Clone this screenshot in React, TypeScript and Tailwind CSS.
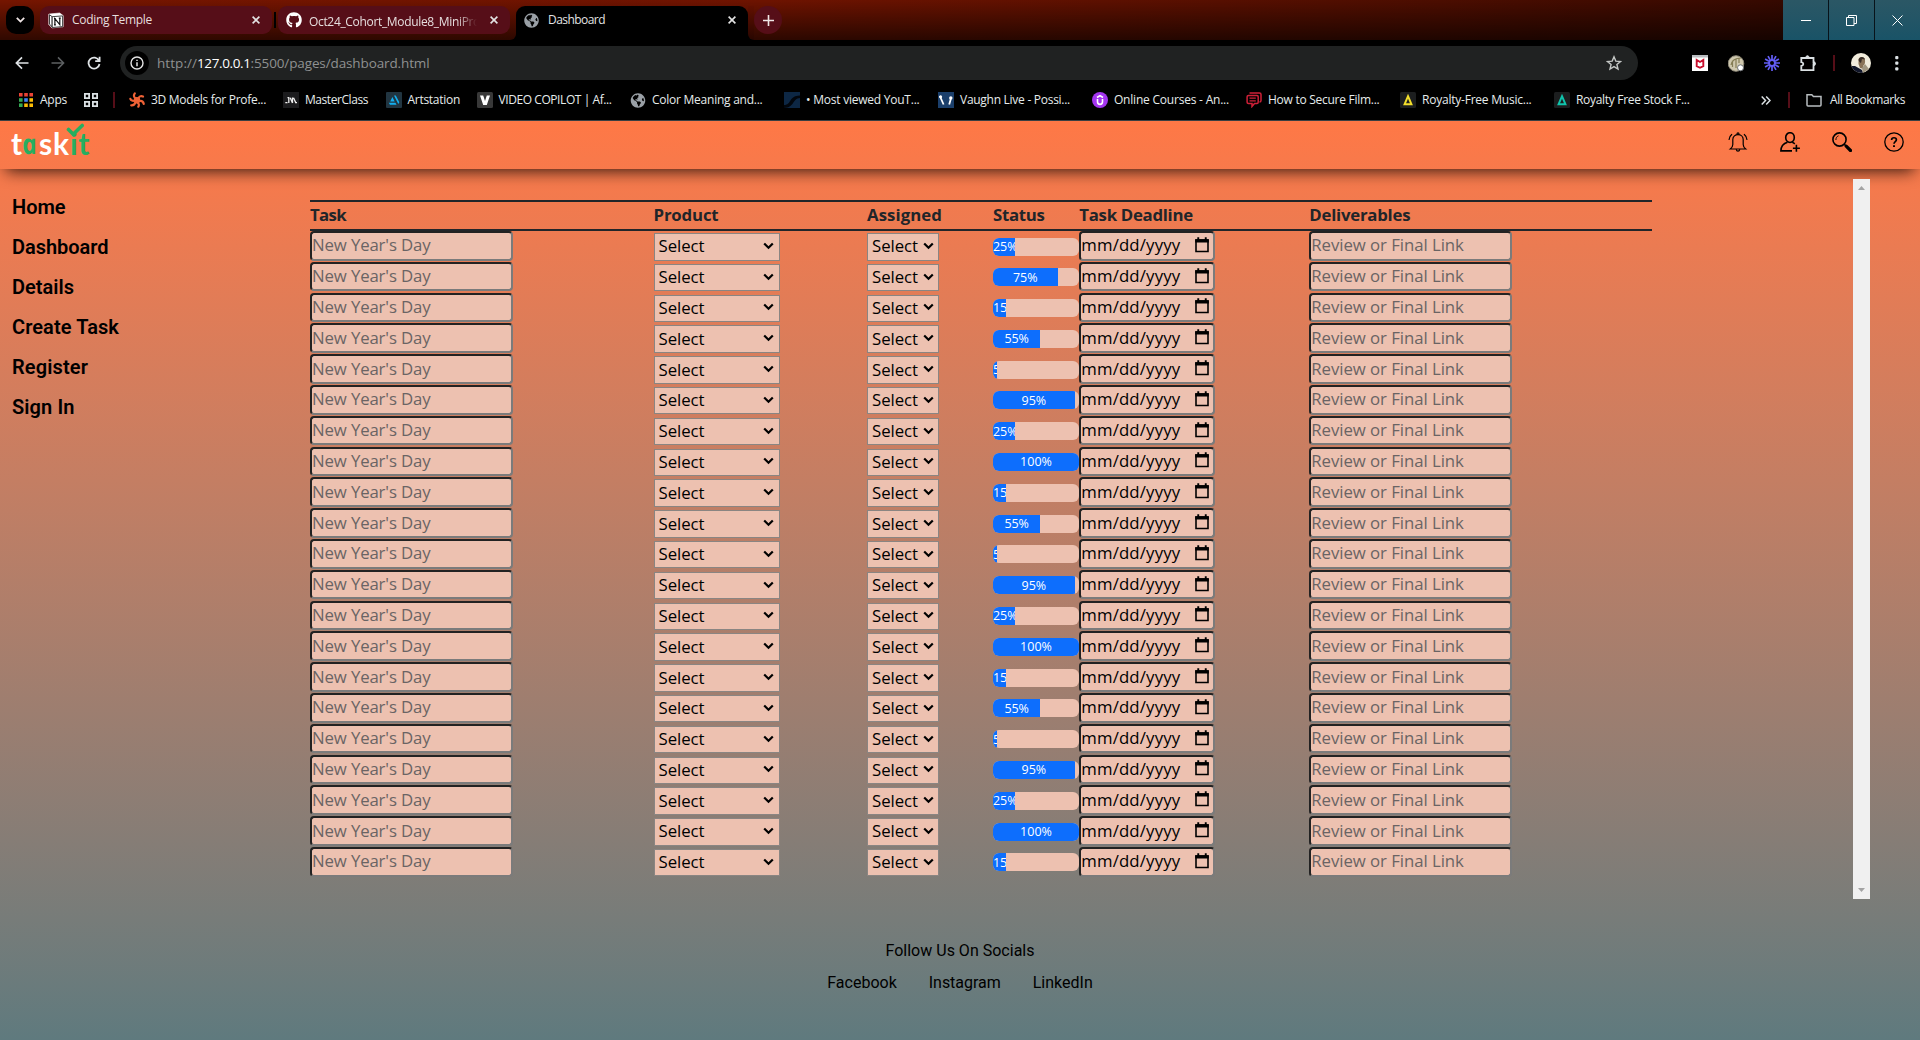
import React, { useLayoutEffect, useRef, useState } from "react";
import { FaGithub, FaGlobeAmericas } from "react-icons/fa";

/* Single-line label whose tracking is adjusted so that it takes up `w` pixels. */
function Fit({ w, children, className = "" }: { w: number; children: string; className?: string }) {
  const ref = useRef<HTMLSpanElement>(null);
  const [spacing, setSpacing] = useState(0);
  useLayoutEffect(() => {
    if (ref.current) {
      const natural = ref.current.getBoundingClientRect().width;
      setSpacing((w - natural) / children.length);
    }
  }, []);
  return (
    <span ref={ref} className={`inline-block justify-self-start whitespace-pre ${className}`} style={{ letterSpacing: `${spacing}px` }}>
      {children}
    </span>
  );
}

const Close = () => (
  <svg className="h-[8px] w-[8px] shrink-0" viewBox="0 0 8 8" stroke="#e3e3e3" strokeWidth="1.6">
    <path d="M.6.6l6.8 6.8M7.4.6L.6 7.4" />
  </svg>
);

const Notion = () => (
  <svg className="h-[17px] w-4 shrink-0" viewBox="0 0 16 16">
    <path d="M.8 1.6L11.6.5l3.600 2.600v11.200L4 15.400.8 12z" fill="#fff" stroke="#fff" strokeWidth=".6" />
    <path d="M1.500 2.200l2.600 2v10.200L1.500 11.600z" fill="#fff" stroke="#111" strokeWidth=".8" />
    <path d="M4.200 4.200l10.400-.8v10.700l-10.400.9z" fill="#fff" stroke="#111" strokeWidth=".8" />
    <path d="M6.900 12.400V6.200l4.900 5.900V5.600M6 6.200h1.800M6 12.400h1.900M10.800 5.600h2" fill="none" stroke="#111" strokeWidth="1.200" />
  </svg>
);

function TitleBar() {
  return (
    <div className="flex h-10 bg-[linear-gradient(to_bottom,rgba(0,0,0,0),rgba(0,0,0,0.6)),linear-gradient(to_right,#761500,#6e1300_40%,#4c0d00_75%,#2c0700)]">
      <div className="flex flex-1 pl-[6px] pt-[6px]">
        <div className="flex h-7 w-7 items-center justify-center rounded-[10px] bg-black">
          <svg className="h-[6px] w-[9px]" viewBox="0 0 9 6" fill="none" stroke="#f0e6e6" strokeWidth="1.8">
            <path d="M.8.9l3.700 3.700L8.200.9" />
          </svg>
        </div>
        <div className="ml-[6px] flex h-7 w-[232px] items-center rounded-[9px] bg-[#560e18] pl-2 pr-3">
          <Notion />
          <Fit w={80} className="ml-2 text-[12px] text-[#e6dede]">Coding Temple</Fit>
          <div className="ml-auto"><Close /></div>
        </div>
        <div className="mx-[2px] mt-[6px] h-4 w-[2px] bg-black" />
        <div className="flex h-7 w-[232px] items-center rounded-[9px] bg-[#560e18] pl-2 pr-3">
          <FaGithub className="h-4 w-4 shrink-0 text-white" />
          <div className="ml-[7px] w-[168px] overflow-hidden [mask-image:linear-gradient(to_right,black_88%,transparent)]">
            <Fit w={171} className="text-[12px] text-[#e6dede]">Oct24_Cohort_Module8_MiniPro</Fit>
          </div>
          <div className="ml-auto"><Close /></div>
        </div>
        <div className="flex w-[6px] items-end overflow-hidden bg-black">
          <div className="h-full w-full rounded-br-[9px] bg-[linear-gradient(to_bottom,#671200,#2c0800)]" />
        </div>
        <div className="flex h-[34px] w-[232px] items-center rounded-t-[9px] bg-black pb-[6px] pl-2 pr-3">
          <FaGlobeAmericas className="h-[15px] w-[15px] shrink-0 text-[#9aa0a6]" />
          <Fit w={57} className="ml-[9px] text-[12px] text-[#e3e3e3]">Dashboard</Fit>
          <div className="ml-auto"><Close /></div>
        </div>
        <div className="flex w-[6px] items-end overflow-hidden bg-black">
          <div className="h-full w-full rounded-bl-[9px] bg-[linear-gradient(to_bottom,#611000,#280600)]" />
        </div>
        <div className="flex h-7 w-7 items-center justify-center rounded-full bg-[#560e18]">
          <svg className="h-[11px] w-[11px]" viewBox="0 0 11 11" stroke="#f0e6e6" strokeWidth="1.6">
            <path d="M5.500 0v11M0 5.500h11" />
          </svg>
        </div>
      </div>
      <div className="flex gap-px bg-[#08131a] text-white">
        <div className="flex w-[45px] items-center justify-center bg-linear-to-b from-[#2b5765] to-[#195367]">
          <div className="h-px w-[10px] bg-white" />
        </div>
        <div className="flex w-[45px] items-center justify-center bg-linear-to-b from-[#2b5765] to-[#195367]">
          <svg className="h-[11px] w-[11px]" viewBox="0 0 11 11" fill="none" stroke="#fff">
            <path d="M.5 2.500h7.500v8H.5zM2.500 2.500v-2h8v8H8" />
          </svg>
        </div>
        <div className="flex w-[45px] items-center justify-center bg-linear-to-b from-[#2b5765] to-[#195367]">
          <svg className="h-[11px] w-[11px]" viewBox="0 0 11 11" stroke="#fff">
            <path d="M.5.5l10 10M10.500.5l-10 10" />
          </svg>
        </div>
      </div>
    </div>
  );
}

function Toolbar() {
  return (
    <div className="flex h-[46px] items-center bg-black text-[#e3e3e3]">
      <svg className="ml-[15px] h-[14px] w-[14px]" viewBox="0 0 14 14" fill="none" stroke="#dfe3e6" strokeWidth="1.7">
        <path d="M13.500 7H1.600M7 1.400L1.400 7 7 12.600" />
      </svg>
      <svg className="ml-[22px] h-[14px] w-[14px]" viewBox="0 0 14 14" fill="none" stroke="#5d6062" strokeWidth="1.5">
        <path d="M.5 7h11.900M7 1.400L12.600 7 7 12.600" />
      </svg>
      <svg className="ml-[22px] h-[14px] w-[14px]" viewBox="0 0 14 14" fill="none" stroke="#dfe3e6" strokeWidth="1.8">
        <path d="M12 4.600A5.500 5.500 0 1 0 12.500 8M12.600.8v4.400H8.200" />
      </svg>
      <div className="ml-[19px] flex h-[34px] w-[1518px] items-center rounded-full bg-[#202222] pl-[5px]">
        <div className="flex h-6 w-6 items-center justify-center rounded-full bg-black">
          <svg className="h-[14px] w-[14px]" viewBox="0 0 14 14" fill="none" stroke="#e3e3e3" strokeWidth="1.4">
            <circle cx="7" cy="7" r="6" />
            <path d="M7 6.300v4M7 3.700v1.400" strokeWidth="1.5" />
          </svg>
        </div>
        <div className="ml-2 flex text-[13.5px] text-[#8f9191]">
          <Fit w={40}>http://</Fit>
          <Fit w={53.5} className="text-white">127.0.0.1</Fit>
          <Fit w={179}>:5500/pages/dashboard.html</Fit>
        </div>
        <svg className="ml-auto mr-[16px] h-4 w-4" viewBox="0 0 16 16" fill="none" stroke="#c4c7c5" strokeWidth="1.4">
          <path d="M8 1.800l1.800 4.300 4.700.4-3.600 3 1.100 4.600-4-2.500-4 2.500 1.100-4.600-3.600-3 4.700-.4z" />
        </svg>
      </div>
      <svg className="ml-[54px] h-4 w-4" viewBox="0 0 16 16">
        <rect width="16" height="16" fill="#fff" />
        <rect width="16" height="2.500" fill="#b9bcc0" />
        <path d="M4.700 5v6.200L8 12.800l3.300-1.600V5L8 7z" fill="none" stroke="#c8102e" strokeWidth="1.900" />
      </svg>
      <svg className="ml-5 h-[17px] w-[17px]" viewBox="0 0 17 17">
        <circle cx="8" cy="8.500" r="7.800" fill="#cfc8ae" stroke="#8d8878" />
        <path d="M3 10c1-5 4-7 10-7M4.500 12V5.500M8 13V3.500M11 8V3.500" fill="none" stroke="#857d55" strokeWidth="1.200" />
        <circle cx="12.500" cy="12.800" r="3" fill="#fff" stroke="#6e7275" />
      </svg>
      <svg className="ml-[19px] h-4 w-4" viewBox="0 0 16 16" fill="none" stroke="#625df5" strokeWidth="2">
        <circle cx="8" cy="8" r="3" />
        <path d="M8 0v5M8 11v5M0 8h5M11 8h5M4 1.100l2 3.500M10 11.400l2 3.500M1.100 4l3.500 2M11.400 10l3.500 2M1.100 12l3.500-2M11.400 6l3.500-2M4 14.900l2-3.500M10 4.600l2-3.500" strokeWidth="1.700" />
      </svg>
      <svg className="ml-[19px] h-[18px] w-[18px]" viewBox="0 0 18 18" fill="none" stroke="#dbe1e4" strokeWidth="1.800">
        <path d="M2.300 4h12.200v4.600h.8v2h-.8v5.600H2.300v-4.200c2.700-.5 2.700-3.300 0-3.800z" />
        <path d="M6.800 3.600c0-2.400 3.300-2.400 3.300 0z" fill="#dbe1e4" strokeWidth="1" />
        <path d="M14.700 8c2.400 0 2.400 3.300 0 3.300z" fill="#dbe1e4" strokeWidth="1" />
      </svg>
      <div className="ml-[16px] h-4 w-[2px] bg-[#560e18]" />
      <svg className="ml-[16px] h-5 w-5" viewBox="0 0 20 20">
        <defs><clipPath id="face"><circle cx="10" cy="10" r="10" /></clipPath></defs>
        <g clipPath="url(#face)">
          <rect width="20" height="20" fill="#f1ecdc" />
          <path d="M-1 13l5 0 7 4 2 5H-1z" fill="#11162a" />
          <path d="M7.500 7c0-4 6.500-4 6.500 0 .3 3-.3 5-2 6l1 3-4-1-1.500-4z" fill="#8a7358" />
          <path d="M7.500 7c.5-4 6-4 6.500-.5l-3-.5-1 4-1.500-1z" fill="#3a2e27" />
          <path d="M14 11l4 5-6 4-1-5z" fill="#a29781" />
        </g>
      </svg>
      <svg className="ml-[24px] h-4 w-1" viewBox="0 0 4 16" fill="#dbe1e4">
        <rect x=".2" y="1" width="3.200" height="3.200" rx="1" /><rect x=".2" y="6.600" width="3.200" height="3.200" rx="1" /><rect x=".2" y="12.200" width="3.200" height="3.200" rx="1" />
      </svg>
    </div>
  );
}

const AppsIcon = () => (
  <svg className="h-4 w-4" viewBox="0 0 16 16">
    <path d="M1 1h3.600v3.600H1zM6.200 1h3.600v3.600H6.200zM11.400 1H15v3.600h-3.600z" fill="#ea4335" />
    <path d="M1 6.200h3.600v3.600H1z" fill="#34a853" /><path d="M6.200 6.200h3.600v3.600H6.200z" fill="#4285f4" /><path d="M11.400 6.200H15v3.600h-3.600z" fill="#fbbc05" />
    <path d="M1 11.400h3.600V15H1z" fill="#34a853" /><path d="M6.200 11.400h3.600V15H6.200zM11.400 11.400H15V15h-3.600z" fill="#fbbc05" />
  </svg>
);
const Swirl = () => (
  <svg className="h-4 w-4" viewBox="0 0 16 16" fill="none" stroke="#ef6236" strokeWidth="2.200" strokeLinecap="round">
    <circle cx="8" cy="8.300" r="3.200" fill="#ef6236" stroke="none" />
    <path d="M7 6.500C4.500 5.500 4.500 3 5.800 1.300M9.500 6.500c.3-2 2.300-3 4.500-2M10.500 9c2-.3 3.800.8 4.200 2.800M8.500 10.500c1.500 1 1.800 3 .8 4.200M6.500 10c-.5 2.200-2 3.500-4.300 3.300M5.500 8.500C3.800 9.300 2 8.500 1.400 6.800" />
  </svg>
);
const Master = () => (
  <svg className="h-4 w-4" viewBox="0 0 16 16">
    <rect width="16" height="16" fill="#1c1c1e" />
    <path d="M2.300 10.600h2.200M5.800 5.500v5.500M4.500 5.700h1.800M7.200 5.700l2.300 5.300M9.500 5.500v5.500M10.500 5.700l2.300 5M12 10.600h2" fill="none" stroke="#eee" strokeWidth="1.300" />
  </svg>
);
const Art = () => (
  <svg className="h-4 w-4" viewBox="0 0 16 16">
    <rect width="16" height="16" rx="1" fill="#213541" />
    <path d="M2.800 10.800h6.600l1.200 2H4zM4.200 9.500L6.400 5l2.300 4.500zM8 3.500h1.800l3.500 6.700-1 1.800z" fill="#13aff0" />
  </svg>
);
const Video = () => (
  <svg className="h-4 w-4" viewBox="0 0 16 16">
    <rect width="16" height="16" rx="1.500" fill="#383838" />
    <path d="M3 3.500h3.200L8 9l1.800-5.500H13L9.800 13H6.200z" fill="#fff" />
  </svg>
);
const Globe = () => <FaGlobeAmericas className="h-[15px] w-4 text-[#9aa0a6]" />;
const Swoosh = () => (
  <svg className="h-4 w-4" viewBox="0 0 16 16">
    <rect width="16" height="16" fill="#0d2744" />
    <path d="M0 13c8 0 4-9 16-9.500v2.500C8 6.500 11 15.500 0 16z" fill="#02060c" />
  </svg>
);
const Vaughn = () => (
  <svg className="h-4 w-4" viewBox="0 0 16 16">
    <rect width="16" height="16" fill="#1b3f6b" />
    <path d="M1.800 4l3.800 8.500M12.800 7l-1.600 5.500" stroke="#fff" strokeWidth="1.800" />
    <circle cx="2.600" cy="4.800" r="1.500" fill="#fff" /><circle cx="12.800" cy="6" r="1.700" fill="#fff" />
  </svg>
);
const Udemy = () => (
  <svg className="h-4 w-4" viewBox="0 0 16 16">
    <circle cx="8" cy="8" r="8" fill="#a435f0" />
    <path d="M5.500 7v2.800c0 3.400 5 3.400 5 0V7M5 5.500L8 3.600l3 1.900" fill="none" stroke="#fff" strokeWidth="1.600" />
  </svg>
);
const Secure = () => (
  <svg className="h-4 w-4" viewBox="0 0 16 16" fill="none" stroke="#cf2038" strokeWidth="1.500">
    <path d="M3.500 1h10c1 0 1.500.5 1.500 1.500v6c0 1-.5 1.500-1.500 1.500M2.500 3.500H11c1 0 1.200.4 1.200 1.200v5.600c0 .9-.4 1.200-1.200 1.200H8.500L6 14.500v-3H2.500c-.9 0-1.400-.4-1.400-1.200V4.700c0-.8.500-1.200 1.400-1.200z" />
    <path d="M3.500 6.200h6.300M3.500 8.800h6.300" strokeWidth="1.300" />
  </svg>
);
const Tri = ({ c }: { c: string }) => (
  <svg className="h-4 w-4" viewBox="0 0 16 16">
    <rect width="16" height="16" rx="1.500" fill="#1c1e1f" />
    <path d="M8 4.200l3.400 8H4.600z" fill="none" stroke={c} strokeWidth="2" />
  </svg>
);

const bookmarks = [
  { w: 154, t: 115, label: "3D Models for Profe...", icon: <Swirl /> },
  { w: 102.5, t: 63, label: "MasterClass", icon: <Master /> },
  { w: 91, t: 52.5, label: "Artstation", icon: <Art /> },
  { w: 153.5, t: 113, label: "VIDEO COPILOT | Af...", icon: <Video /> },
  { w: 154, t: 110.5, label: "Color Meaning and...", icon: <Globe /> },
  { w: 154, t: 113.5, label: "• Most viewed YouT...", icon: <Swoosh /> },
  { w: 154, t: 110, label: "Vaughn Live - Possi...", icon: <Vaughn /> },
  { w: 154, t: 115, label: "Online Courses - An...", icon: <Udemy /> },
  { w: 154, t: 111.5, label: "How to Secure Film...", icon: <Secure /> },
  { w: 154, t: 109.5, label: "Royalty-Free Music...", icon: <Tri c="#f2de2c" /> },
  { w: 154, t: 113.5, label: "Royalty Free Stock F...", icon: <Tri c="#10c4ac" /> },
];

function Bookmarks() {
  return (
    <div className="flex h-[35px] items-center border-b border-[#3c4043] bg-black pb-[6px] text-[12px] text-[#e6ecec]">
      <div className="ml-[18px] flex w-[66px] items-center gap-[6px]">
        <AppsIcon />
        <Fit w={27}>Apps</Fit>
      </div>
      <svg className="h-[14px] w-[14px]" viewBox="0 0 14 14" fill="none" stroke="#dbe1e4" strokeWidth="1.800">
        <path d="M.9.9h4.200v4.200H.9zM8.900.9h4.200v4.200H8.900zM.9 8.900h4.200v4.200H.9zM8.900 8.900h4.200v4.200H8.900z" />
      </svg>
      <div className="ml-[15px] mr-[14px] h-4 w-[2px] bg-[#560e18]" />
      {bookmarks.map((b) => (
        <div key={b.label} className="flex shrink-0 items-center gap-[6px]" style={{ width: b.w }}>
          {b.icon}
          <Fit w={b.t}>{b.label}</Fit>
        </div>
      ))}
      <svg className="ml-[53px] h-[9px] w-[10px]" viewBox="0 0 10 9" fill="none" stroke="#dbe1e4" strokeWidth="1.500">
        <path d="M.7.6l3.800 3.900L.7 8.400M5.200.6L9 4.500 5.200 8.400" />
      </svg>
      <div className="ml-[17px] h-4 w-[2px] bg-[#560e18]" />
      <svg className="ml-[16px] h-[14px] w-4" viewBox="0 0 16 14" fill="none" stroke="#b8bdc0" strokeWidth="1.500">
        <path d="M1 12V1.800h4.800l1.600 1.700H15V12c0 .6-.4 1-1 1H2c-.6 0-1-.4-1-1z" />
      </svg>
      <Fit w={75} className="ml-[8px]">All Bookmarks</Fit>
    </div>
  );
}

function SiteHeader() {
  return (
    <header className="flex h-12 items-start justify-between pl-[11px] pr-4 shadow-[0_8px_16px_-6px_rgba(0,0,0,0.8)]">
      <div className="relative flex h-12 w-[80px] font-['Lato'] text-[30px] font-bold leading-[44px] text-white">
        <Fit w={11.5}>t</Fit>
        <span className="inline-block w-[16.500px] origin-[50%_75%] skew-x-[12deg] scale-x-[0.88] font-['Open_Sans'] text-[28px] font-bold italic leading-[44px] text-[#27ae60]">a</span>
        <Fit w={31}>sk</Fit>
        <Fit w={20} className="text-[#27ae60]">it</Fit>
        <svg className="absolute left-[55px] top-[2px] h-[14px] w-[19px]" viewBox="0 0 19 14" fill="none" stroke="#27ae60" strokeWidth="3.600" strokeLinecap="round">
          <path d="M2.500 6.500l4.700 4.700 9-8.700" />
        </svg>
      </div>
      <div className="mt-[11px] flex gap-[32px] text-black">
        <svg className="h-5 w-5" viewBox="0 0 20 20" fill="none" stroke="currentColor" strokeWidth="1.200" strokeLinecap="round">
          <path d="M2.300 17h15.400c-1.600-1.300-2.500-2.300-2.500-4.500V7.500c0-6.500-10.400-6.500-10.400 0v5c0 2.200-.9 3.200-2.500 4.500z" />
          <path d="M8.300 17.500c.3 2.200 3.100 2.200 3.400 0M9 2c0-1.600 2-1.600 2 0M3.700 2.500C2.200 3.600 1.300 5.200 1.100 7.500M16.300 2.500c1.500 1.100 2.400 2.700 2.600 5" />
        </svg>
        <svg className="h-5 w-5" viewBox="0 0 20 20" fill="none" stroke="currentColor" strokeWidth="1.600">
          <ellipse cx="10" cy="5.600" rx="4.300" ry="4.900" />
          <path d="M7.500 10.300C3.500 11.500 1 14.500.9 18.900H12M12.200 10.300c1 .3 1.800.8 2.600 1.500M16.400 12.700v7M12.900 16.200h7" />
        </svg>
        <svg className="h-5 w-5" viewBox="0 0 20 20" fill="none" stroke="currentColor">
          <circle cx="7.500" cy="7.500" r="6.600" strokeWidth="1.600" />
          <path d="M12.300 12.300l2 2" strokeWidth="1.600" />
          <path d="M14.200 14.200l4.300 4.300" strokeWidth="3.200" strokeLinecap="round" />
          <path d="M3.900 8c0-2.200.9-3.400 2.600-4.200" strokeWidth=".9" />
        </svg>
        <svg className="h-5 w-5" viewBox="0 0 20 20" fill="none" stroke="currentColor">
          <circle cx="10" cy="10" r="9.200" strokeWidth="1.300" />
          <path d="M7.600 8c0-3.100 4.800-2.900 4.800-.2 0 1.800-2.400 1.800-2.400 4" strokeWidth="1.700" />
          <path d="M10 13.200v1.900" strokeWidth="1.900" />
        </svg>
      </div>
    </header>
  );
}

const navItems: [string, number][] = [["Home", 53.5], ["Dashboard", 96.5], ["Details", 62], ["Create Task", 107], ["Register", 76], ["Sign In", 62.5]];

const columns = "grid grid-cols-[343.500px_213.500px_126px_86.300px_230px_1fr]";

const Field = ({ text, w }: { text: string; w: number }) => (
  <div className="flex h-[29.600px] w-[202.500px] items-center rounded-[4px] border-2 border-b-[#7b7b7b] border-l-[#222] border-r-[#7b7b7b] border-t-[#222] bg-[#edc1b0] text-[#6a6464]">
    <Fit w={w}>{text}</Fit>
  </div>
);

const Chevron = () => (
  <svg className="mb-[2px] h-[8px] w-[11px]" viewBox="0 0 11 8" fill="none" stroke="#000" strokeWidth="2.200">
    <path d="M1.200 1.500l4.300 4.300 4.300-4.300" />
  </svg>
);

const progress = [25, 75, 15, 55, 5, 95, 25, 100, 15, 55, 5, 95, 25, 100, 15, 55, 5, 95, 25, 100, 15];

function Row({ pct }: { pct: number }) {
  return (
    <div className={`${columns} h-[30.800px] text-[16.800px] leading-none`}>
      <Field text="New Year's Day" w={118.5} />
      <div className="mt-[2px] flex h-[27.500px] w-[126px] items-center justify-between border border-[#8a8582] bg-[#edc1b0] pl-[4px] pr-[5px] text-black">
        <Fit w={46}>Select</Fit>
        <Chevron />
      </div>
      <div className="mt-[2px] flex h-[27.500px] w-[72px] items-center justify-between border border-[#8a8582] bg-[#edc1b0] pl-[4px] pr-[4px] text-black">
        <Fit w={46}>Select</Fit>
        <Chevron />
      </div>
      <div className="mt-[6.500px] h-[18px] w-[86px] overflow-hidden rounded-[6px] bg-[#edc1b0]">
        <div className="flex h-full flex-col justify-center overflow-hidden whitespace-nowrap bg-[#0d6efd] pt-px text-center text-[12.500px] text-white" style={{ width: `${pct}%` }}>
          <div><Fit w={pct === 100 ? 32 : pct === 5 ? 17 : 24.5}>{`${pct}%`}</Fit></div>
        </div>
      </div>
      <div className="flex h-[29.600px] w-[135.500px] items-center justify-between rounded-[4px] border-2 border-b-[#7b7b7b] border-l-[#222] border-r-[#7b7b7b] border-t-[#222] bg-[#edc1b0] pr-[4px] text-black">
        <Fit w={99}>mm/dd/yyyy</Fit>
        <svg className="mb-[2px] h-[16px] w-[14px]" viewBox="0 0 14 16">
          <path d="M1 3h12v11.500H1z" fill="none" stroke="#000" strokeWidth="1.600" />
          <path d="M.2 2.200h13.600v3.400H.2zM2.300.2h1.900v3H2.300zM9.800.2h1.900v3H9.800z" />
        </svg>
      </div>
      <Field text="Review or Final Link" w={152.5} />
    </div>
  );
}

function TaskTable() {
  return (
    <div className="mt-[21px] w-[1342px]">
      <div className={`${columns} h-[31px] items-center border-y-2 border-[#212529] pb-px text-[16.800px] font-bold leading-none text-[#212529]`}>
        <Fit w={36}>Task</Fit>
        <Fit w={65}>Product</Fit>
        <Fit w={75}>Assigned</Fit>
        <Fit w={51.5}>Status</Fit>
        <Fit w={113.5}>Task Deadline</Fit>
        <Fit w={101}>Deliverables</Fit>
      </div>
      {progress.map((pct, i) => <Row key={i} pct={pct} />)}
    </div>
  );
}

export default function App() {
  return (
    <div className="flex h-[1040px] w-[1920px] flex-col overflow-hidden bg-black font-['Open_Sans','Noto_Sans',sans-serif]">
      <TitleBar />
      <Toolbar />
      <Bookmarks />
      <div className="flex flex-1 flex-col bg-linear-to-b from-[#ff7846] to-[#5f7a7e]">
        <SiteHeader />
        <div className="flex h-[730px] pt-[10px]">
          <nav className="flex w-[310px] flex-col pl-3 pt-[8px] font-['Roboto'] text-[20px] font-semibold leading-10 text-black">
            {navItems.map(([label, w]) => <div key={label}><Fit w={w}>{label}</Fit></div>)}
          </nav>
          <main className="flex w-[1560px] justify-between">
            <TaskTable />
            <div className="flex h-[720px] w-[17px] flex-col items-center justify-between bg-[#f0f0f0] py-[7px]">
              <svg className="h-[4px] w-[7px]" viewBox="0 0 7 4" fill="#a3a3a3"><path d="M0 4L3.500 0 7 4z" /></svg>
              <svg className="h-[4px] w-[7px]" viewBox="0 0 7 4" fill="#a3a3a3"><path d="M0 0l3.500 4L7 0z" /></svg>
            </div>
          </main>
        </div>
        <footer className="flex flex-col items-center gap-2 pt-[40px] font-['Roboto'] text-[16px] leading-6 text-black">
          <Fit w={149}>Follow Us On Socials</Fit>
          <div className="flex gap-8">
            <Fit w={69.5}>Facebook</Fit>
            <Fit w={72}>Instagram</Fit>
            <Fit w={60}>LinkedIn</Fit>
          </div>
        </footer>
      </div>
    </div>
  );
}
